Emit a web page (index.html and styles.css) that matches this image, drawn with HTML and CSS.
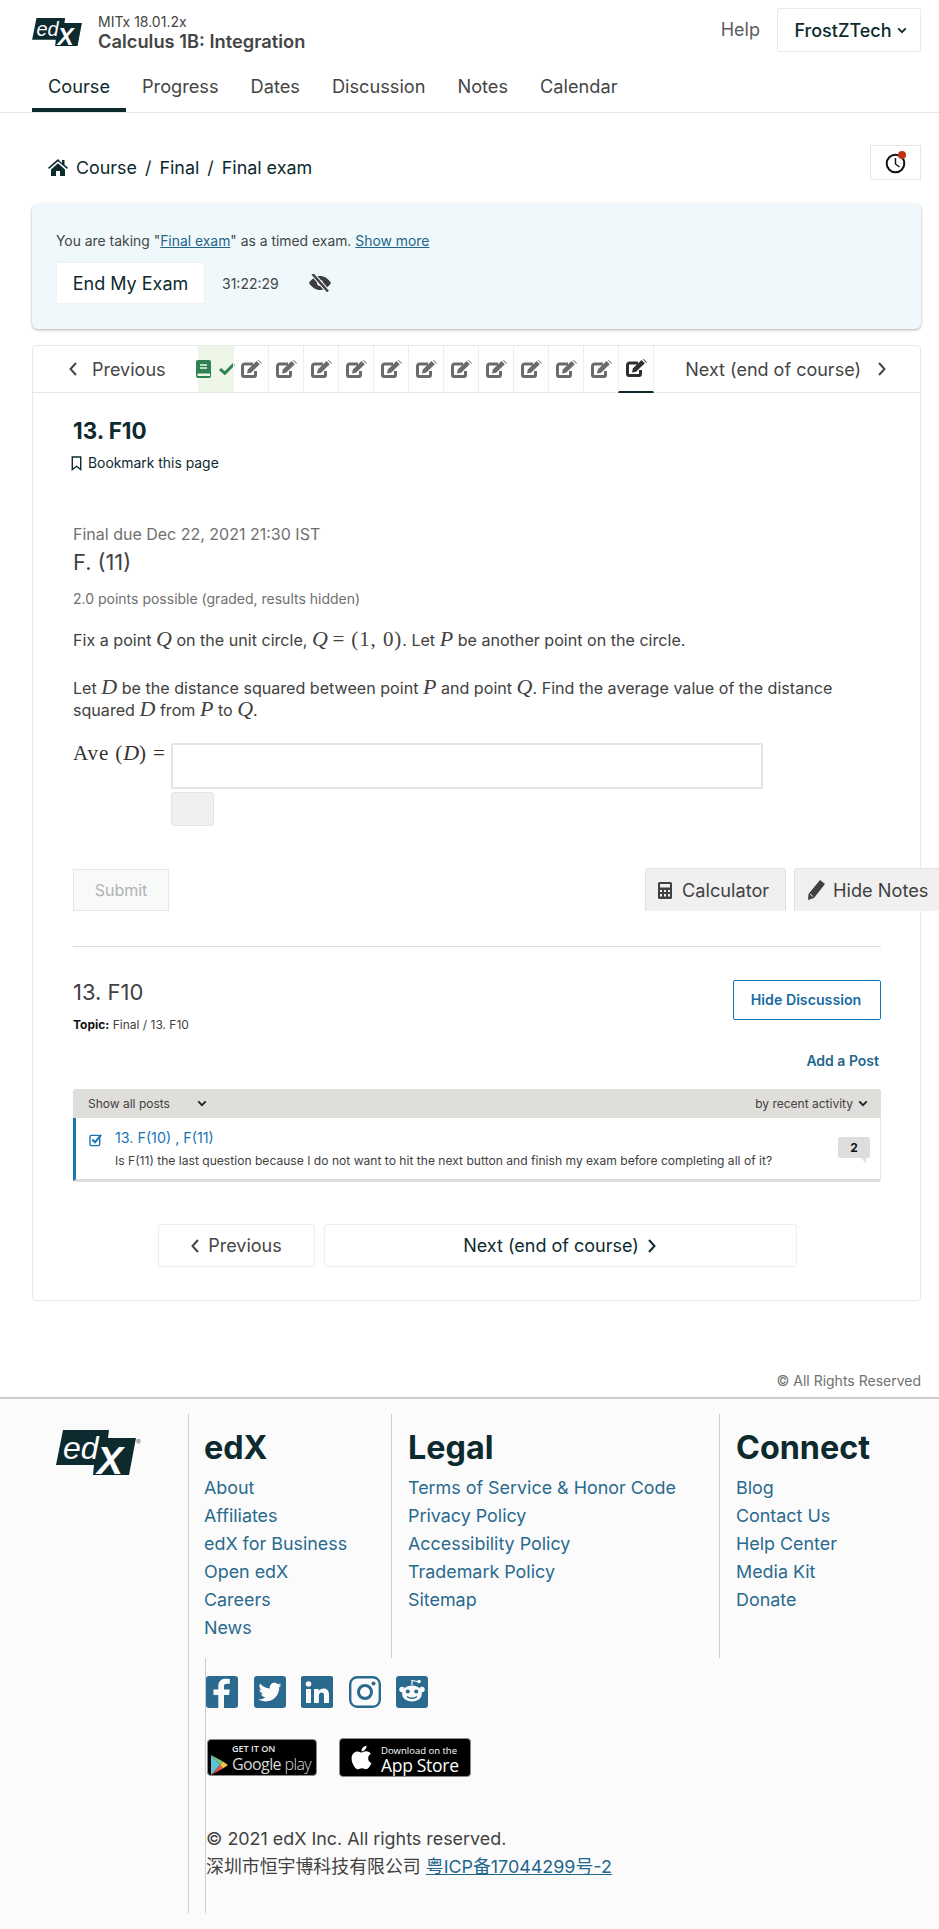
FILE: index.html
```html
<!DOCTYPE html>
<html lang="en">
<head>
<meta charset="utf-8">
<title>Calculus 1B: Integration</title>
<link rel="stylesheet" href="styles.css">
</head>
<body>
<svg class="defs" width="0" height="0" aria-hidden="true">
  <symbol id="edit" viewBox="0 0 21 18">
    <path d="M12 4H3.500A2 2 0 0 0 1.500 6v9a1.500 1.500 0 0 0 1.500 1.500h10a1.500 1.500 0 0 0 1.500-1.500V11" fill="none" stroke="currentColor" stroke-width="3"/>
    <path d="M6 13.500l.8-4L15.500 1l3.300 3.200-8.700 8.500z M16.800.2l.8-.2 3.200 3-.3 1z" fill="currentColor"/>
  </symbol>
  <symbol id="chev-l" viewBox="0 0 10 16"><path d="M8 2L2.500 8 8 14" fill="none" stroke="currentColor" stroke-width="2"/></symbol>
  <symbol id="chev-r" viewBox="0 0 10 16"><path d="M2 2l5.500 6L2 14" fill="none" stroke="currentColor" stroke-width="2"/></symbol>
  <symbol id="chev-d" viewBox="0 0 12 8"><path d="M1.500 1.500L6 6l4.500-4.500" fill="none" stroke="currentColor" stroke-width="2.200"/></symbol>
</svg>

<header class="site-header">
  <div class="head-row">
    <div class="brand">
      <svg class="logo-small" viewBox="0 0 80 45">
        <path d="M7 0H53L52 8H80L73 45H37L38 35H0z" fill="#0d2a2e"/>
        <text x="7" y="29" class="logo-ed">ed</text>
        <text x="41" y="44" class="logo-x">X</text>
      </svg>
      <div class="course-id">
        <div class="org">MITx 18.01.2x</div>
        <div class="course-name">Calculus 1B: Integration</div>
      </div>
    </div>
    <div class="head-actions">
      <a class="help">Help</a>
      <button class="user-btn">FrostZTech <svg class="chev-small"><use href="#chev-d"/></svg></button>
    </div>
  </div>
  <nav class="tabs">
    <a class="tab active">Course</a>
    <a class="tab">Progress</a>
    <a class="tab">Dates</a>
    <a class="tab">Discussion</a>
    <a class="tab">Notes</a>
    <a class="tab">Calendar</a>
  </nav>
</header>

<div class="crumb-row">
  <div class="crumbs">
    <svg class="home" viewBox="0 0 20 17"><path d="M10 0L0 8.700l1 1.200L10 2.300l9 7.600 1-1.200-3.500-3V1h-2.500v3.300z M3 10.400L10 4.300l7 6.100V17h-5v-5H8v5H3z" fill="#0d2a2e"/></svg>
    <span>Course</span><span class="sep">/</span><span>Final</span><span class="sep">/</span><span>Final exam</span>
  </div>
  <button class="clock-btn">
    <svg viewBox="0 0 22 24" width="22" height="24"><circle cx="10.500" cy="13.500" r="8.800" fill="none" stroke="#111" stroke-width="2"/><path d="M10.500 8v6l4 3" fill="none" stroke="#111" stroke-width="1.400"/><circle cx="17" cy="5" r="4" fill="#c0320f"/></svg>
  </button>
</div>

<section class="banner">
  <p class="banner-text">You are taking "<a class="ulink">Final exam</a>" as a timed exam. <a class="ulink">Show more</a></p>
  <div class="banner-row">
    <button class="end-btn">End My Exam</button>
    <span class="timer">31:22:29</span>
    <svg class="eye" viewBox="0 0 22 18"><path d="M0 9c3-4.800 6.800-7 11-7s8 2.200 11 7c-3 4.800-6.800 7-11 7S3 13.800 0 9z" fill="#3d3d3d"/><circle cx="11" cy="9" r="3" fill="#eff8fa"/><path d="M3.500 0L19 17.500" stroke="#eff8fa" stroke-width="4.500"/><path d="M3.500 0L19 17.500" stroke="#3d3d3d" stroke-width="2.400"/></svg>
  </div>
</section>

<main class="card">
  <nav class="unit-nav">
    <a class="un-prev"><svg class="chev"><use href="#chev-l"/></svg><span>Previous</span></a>
    <div class="un-items">
      <a class="un-item done">
        <svg class="book" viewBox="0 0 15 18"><rect width="15" height="18" rx="2" fill="#2e8151"/><path d="M4 5h7M4 8h7" stroke="#eef6e8" stroke-width="1.400"/><path d="M1.500 13.500h12.500v2.500H1.500z" fill="#eef6e8"/></svg>
        <svg class="tick" viewBox="0 0 16 12"><path d="M1 6l4.800 4.300L15 1" fill="none" stroke="#2e8151" stroke-width="3"/></svg>
      </a>
      <a class="un-item"><svg class="ed"><use href="#edit"/></svg></a>
      <a class="un-item"><svg class="ed"><use href="#edit"/></svg></a>
      <a class="un-item"><svg class="ed"><use href="#edit"/></svg></a>
      <a class="un-item"><svg class="ed"><use href="#edit"/></svg></a>
      <a class="un-item"><svg class="ed"><use href="#edit"/></svg></a>
      <a class="un-item"><svg class="ed"><use href="#edit"/></svg></a>
      <a class="un-item"><svg class="ed"><use href="#edit"/></svg></a>
      <a class="un-item"><svg class="ed"><use href="#edit"/></svg></a>
      <a class="un-item"><svg class="ed"><use href="#edit"/></svg></a>
      <a class="un-item"><svg class="ed"><use href="#edit"/></svg></a>
      <a class="un-item"><svg class="ed"><use href="#edit"/></svg></a>
      <a class="un-item current"><svg class="ed"><use href="#edit"/></svg></a>
    </div>
    <a class="un-next"><span>Next (end of course)</span><svg class="chev"><use href="#chev-r"/></svg></a>
  </nav>

  <div class="content">
    <h1 class="unit-title">13. F10</h1>
    <a class="bookmark"><svg viewBox="0 0 11 16" width="11" height="15"><path d="M1 1h9v13.500L5.500 11 1 14.500z" fill="none" stroke="#0d2a2e" stroke-width="1.500"/></svg>Bookmark this page</a>
    <div class="due">Final due Dec 22, 2021 21:30 IST</div>
    <h2 class="problem">F. (11)</h2>
    <div class="points">2.0 points possible (graded, results hidden)</div>
    <p class="para">Fix a point <i class="m">Q</i> on the unit circle, <i class="m">Q</i> <span class="mr">= (1, 0)</span>. Let <i class="m">P</i> be another point on the circle.</p>
    <p class="para para-2">Let <i class="m">D</i> be the distance squared between point <i class="m">P</i> and point <i class="m">Q</i>. Find the average value of the distance squared <i class="m">D</i> from <i class="m">P</i> to <i class="m">Q</i>.</p>
    <div class="answer">
      <div class="ans-label"><span class="mr">Ave (</span><i class="m">D</i><span class="mr">) =</span></div>
      <div class="ans-fields">
        <div class="ans-input"></div>
        <div class="ans-status"></div>
      </div>
    </div>
    <div class="tools">
      <button class="submit">Submit</button>
      <div class="tool-tabs">
        <a class="tool"><svg viewBox="0 0 14 17" width="14" height="17"><path fill-rule="evenodd" d="M1.500 0h11A1.500 1.500 0 0 1 14 1.500v14a1.500 1.500 0 0 1-1.500 1.500h-11A1.500 1.500 0 0 1 0 15.500v-14A1.500 1.500 0 0 1 1.500 0zM2 2v3.500h10V2zM2 8v2h2V8zm4 0v2h2V8zm4 0v2h2V8zM2 12v2.500h2V12zm4 0v2.500h2V12zm4 0v2.500h2V12z" fill="#414141"/></svg>Calculator</a>
        <a class="tool"><svg viewBox="0 0 18 20" width="18" height="20"><path d="M13 0l5 4-11 14-6 2 .5-6z" fill="#414141"/><path d="M3 14l3 2.500" stroke="#f0f0f0" stroke-width="1"/></svg>Hide Notes</a>
      </div>
    </div>
    <hr class="rule">
    <div class="disc-head">
      <div>
        <h2 class="disc-title">13. F10</h2>
        <div class="topic"><b>Topic:</b> Final / 13. F10</div>
      </div>
      <button class="hide-disc">Hide Discussion</button>
    </div>
    <div class="add-post"><a>Add a Post</a></div>
    <div class="threads">
      <div class="thr-head">
        <span class="thr-filter">Show all posts<svg class="chev-tiny"><use href="#chev-d"/></svg></span>
        <span class="thr-sort">by recent activity<svg class="chev-tiny"><use href="#chev-d"/></svg></span>
      </div>
      <div class="thread">
        <svg class="thr-check" viewBox="0 0 14 15" width="13" height="14"><rect x="1" y="2.500" width="10.500" height="11" rx="1.500" fill="none" stroke="#1a75b5" stroke-width="1.500"/><path d="M3.500 7l3 3L13 2" fill="none" stroke="#1a75b5" stroke-width="2.200"/></svg>
        <div class="thr-body">
          <a class="thr-title">13. F(10) , F(11)</a>
          <div class="thr-preview">Is F(11) the last question because I do not want to hit the next button and finish my exam before completing all of it?</div>
        </div>
        <span class="badge">2</span>
      </div>
    </div>
    <div class="seq-bottom">
      <a class="seq-btn seq-prev"><svg class="chev"><use href="#chev-l"/></svg>Previous</a>
      <a class="seq-btn seq-next">Next (end of course)<svg class="chev"><use href="#chev-r"/></svg></a>
    </div>
  </div>
</main>

<div class="rights">© All Rights Reserved</div>

<footer class="footer">
  <div class="foot-logo">
    <svg class="logo-big" viewBox="0 0 80 45">
      <path d="M7 0H53L52 8H80L73 45H37L38 35H0z" fill="#0d2a2e"/>
      <text x="7" y="29" class="logo-ed">ed</text>
      <text x="41" y="44" class="logo-x">X</text>
    </svg>
    <span class="reg">®</span>
  </div>
  <div class="foot-main">
    <div class="foot-cols">
      <div class="fcol fcol-a">
        <h2>edX</h2>
        <a>About</a><a>Affiliates</a><a>edX for Business</a><a>Open edX</a><a>Careers</a><a>News</a>
      </div>
      <div class="fcol fcol-b">
        <h2>Legal</h2>
        <a>Terms of Service &amp; Honor Code</a><a>Privacy Policy</a><a>Accessibility Policy</a><a>Trademark Policy</a><a>Sitemap</a>
      </div>
      <div class="fcol fcol-c">
        <h2>Connect</h2>
        <a>Blog</a><a>Contact Us</a><a>Help Center</a><a>Media Kit</a><a>Donate</a>
      </div>
    </div>
    <div class="foot-lower">
      <div class="social">
        <svg viewBox="0 0 32 32" width="32" height="32"><rect width="32" height="32" rx="3" fill="#2a6a8e"/><path d="M18 32V19h5l.8-5.500H18V10.500c0-1.600.5-2.700 2.800-2.700h3V3c-.6-.1-2.300-.2-4.300-.2-4.300 0-7.200 2.600-7.200 7.300v3.400H7.500V19h4.800v13z" fill="#fbfbfb"/></svg>
        <svg viewBox="0 0 32 32" width="32" height="32"><rect width="32" height="32" rx="3" fill="#2a6a8e"/><g transform="translate(4.500 4.500) scale(.045)"><path d="M459.370 151.716c.325 4.548.325 9.097.325 13.645 0 138.720-105.583 298.558-298.558 298.558-59.452 0-114.680-17.219-161.137-47.106 8.447.974 16.568 1.299 25.340 1.299 49.055 0 94.213-16.568 130.274-44.832-46.132-.975-84.792-31.188-98.112-72.772 6.498.974 12.995 1.624 19.818 1.624 9.421 0 18.843-1.300 27.614-3.573-48.081-9.747-84.143-51.980-84.143-102.985v-1.299c13.969 7.797 30.214 12.670 47.431 13.319-28.264-18.843-46.781-51.005-46.781-87.391 0-19.492 5.197-37.360 14.294-52.954 51.655 63.675 129.300 105.258 216.365 109.807-1.624-7.797-2.599-15.918-2.599-24.040 0-57.828 46.782-104.934 104.934-104.934 30.213 0 57.502 12.670 76.670 33.137 23.715-4.548 46.456-13.320 66.599-25.340-7.798 24.366-24.366 44.833-46.132 57.827 21.117-2.273 41.584-8.122 60.426-16.243-14.292 20.791-32.161 39.308-52.628 54.253z" fill="#fbfbfb"/></g></svg>
        <svg viewBox="0 0 32 32" width="32" height="32"><rect width="32" height="32" rx="2" fill="#2a6a8e"/><circle cx="7.500" cy="8" r="2.800" fill="#fbfbfb"/><path d="M5 13h5v14H5z M13 13h4.700v2c1-1.500 2.700-2.400 4.800-2.400 3.900 0 5.500 2.400 5.500 6.400v8h-5v-7.300c0-2-.7-3.200-2.400-3.200-1.900 0-2.700 1.300-2.700 3.200V27H13z" fill="#fbfbfb"/></svg>
        <svg viewBox="0 0 32 32" width="32" height="32"><rect x="1.200" y="1.200" width="29.600" height="29.600" rx="7" fill="#fbfbfb" stroke="#2a6a8e" stroke-width="2.400"/><circle cx="16" cy="16" r="6.500" fill="none" stroke="#2a6a8e" stroke-width="3"/><circle cx="24.500" cy="7.500" r="2" fill="#2a6a8e"/></svg>
        <svg viewBox="0 0 32 32" width="32" height="32"><rect width="32" height="32" rx="3" fill="#2a6a8e"/><path d="M16 9V4.500l5 1" fill="none" stroke="#fbfbfb" stroke-width="1.200"/><circle cx="23" cy="5.500" r="1.800" fill="#fbfbfb"/><ellipse cx="16" cy="17.500" rx="10" ry="8" fill="#fbfbfb"/><circle cx="6" cy="13.500" r="2.700" fill="#fbfbfb"/><circle cx="26" cy="13.500" r="2.700" fill="#fbfbfb"/><circle cx="11.800" cy="15.500" r="2" fill="#2a6a8e"/><circle cx="20.200" cy="15.500" r="2" fill="#2a6a8e"/><path d="M11 20.500c2.500 2.300 7.500 2.300 10 0" fill="none" stroke="#2a6a8e" stroke-width="1.300"/></svg>
      </div>
      <div class="stores">
        <a class="store gplay">
          <svg viewBox="0 0 17 20" width="17" height="20"><path d="M0 0l9 10-9 10z" fill="#5ac6d8"/><path d="M0 0l12 6.500L9 10z" fill="#7bc47f"/><path d="M0 20l12-6.500L9 10z" fill="#e2574c"/><path d="M12 6.500L17 10l-5 3.500L9 10z" fill="#f2c14e"/></svg>
          <span class="gp-top">GET IT ON</span>
          <span class="gp-main">Google<span class="gp-play"> play</span></span>
        </a>
        <a class="store appstore">
          <svg viewBox="0 0 384 512" width="21" height="27"><path d="M318.700 268.700c-.2-36.700 16.400-64.400 50-84.800-18.800-26.900-47.200-41.700-84.700-44.600-35.500-2.800-74.300 20.700-88.500 20.700-15 0-49.400-19.700-76.400-19.700C63.300 141.200 4 184.800 4 273.500q0 39.300 14.400 81.200c12.800 36.700 59 126.700 107.200 125.200 25.200-.6 43-17.900 75.800-17.900 31.800 0 48.300 17.900 76.400 17.900 48.600-.7 90.400-82.500 102.600-119.300-65.200-30.700-61.700-90-61.700-91.900zm-56.600-164.200c27.300-32.400 24.800-61.900 24-72.500-24.100 1.400-52 16.400-67.900 34.900-17.500 19.800-27.800 44.300-25.600 71.900 26.100 2 49.900-11.400 69.500-34.300z" fill="#fff"/></svg>
          <span class="as-top">Download on the</span>
          <span class="as-main">App Store</span>
        </a>
      </div>
      <div class="copy">© 2021 edX Inc. All rights reserved.</div>
      <div class="copy">深圳市恒宇博科技有限公司 <a class="icp">粤ICP备17044299号-2</a></div>
    </div>
  </div>
</footer>
</body>
</html>
```
FILE: styles.css
```css
* { box-sizing: border-box; }
html, body { margin: 0; padding: 0; }
body {
  width: 939px;
  height: 1929px;
  overflow: hidden;
  background: #fff;
  color: #414141;
  font-family: Inter, "Noto Sans CJK SC", sans-serif;
  font-size: 16px;
}
a { color: inherit; text-decoration: none; }
button { font-family: inherit; }
h1, h2, p { margin: 0; }
.defs { position: absolute; }
.logo-ed { font: italic 400 32px "Liberation Sans", sans-serif; fill: #fff; }
.logo-x { font: italic 700 39px "Liberation Sans", sans-serif; fill: #fff; }

.site-header { border-bottom: 1px solid #e6e6e6; height: 113px; }
.head-row { display: flex; justify-content: space-between; padding: 8px 18px 0 32px; height: 60px; }
.brand { display: flex; align-items: flex-start; gap: 16px; padding-top: 10px; }
.logo-small { width: 50px; height: 28px; overflow: visible; }
.course-id { margin-top: -5px; }
.org { font-size: 14px; line-height: 18px; color: #454545; }
.course-name { font-size: 18.300px; font-weight: 600; line-height: 24px; color: #454545; margin-top: -2px; }
.head-actions { display: flex; align-items: flex-start; gap: 17px; }
.help { font-size: 18px; line-height: 44px; color: #5b5b5b; }
.user-btn {
  width: 144px; height: 44px; background: #fff; border: 1px solid #eaeaea; border-radius: 2px;
  font-size: 18px; font-weight: 500; color: #0d2a2e; padding: 0 0 0 3px; display: flex; align-items: center; justify-content: center; gap: 5px;
}
.chev-small { width: 10px; height: 7px; color: #0d2a2e; }
.tabs { display: flex; padding-left: 32px; }
.tab { padding: 14px 16px 10px; font-size: 18.200px; line-height: 24px; height: 52px; color: #454545; border-bottom: 4px solid transparent; white-space: nowrap; }
.tab.active { color: #0d2a2e; border-bottom-color: #0d2a2e; }

.crumb-row { display: flex; justify-content: space-between; padding: 32px 18px 0 48px; }
.crumbs { display: flex; align-items: center; height: 26px; margin-top: 9px; font-size: 17.900px; color: #0d2a2e; }
.crumbs .sep { margin: 0 8px; }
.home { width: 20px; height: 17px; margin-right: 8px; }
.clock-btn { width: 51px; height: 35px; background: #fff; border: 1px solid #e6e6e6; padding: 0 0 1px; display: flex; align-items: center; justify-content: center; }

.banner {
  margin: 24px 18px 0 32px; height: 125px; padding: 27px 24px 0;
  background: #eff8fa; border-radius: 6px;
  box-shadow: 0 1px 3px rgba(0,0,0,.3);
}
.banner-text { font-size: 13.900px; line-height: 20px; color: #454545; }
.ulink { color: #23668c; text-decoration: underline; }
.banner-row { display: flex; align-items: center; margin-top: 11px; }
.end-btn { width: 149px; height: 42px; background: #fff; border: 1px solid #f2f2f2; padding: 0; font-size: 18px; color: #0d2a2e; }
.timer { font-size: 14px; color: #454545; margin-left: 17px; }
.eye { width: 22px; height: 18px; margin-left: 30px; }

.card { margin: 16px 18px 0 32px; height: 956px; border: 1px solid #e8e8e8; border-radius: 4px; }
.unit-nav { display: flex; height: 47px; border-bottom: 1px solid #e6e6e6; font-size: 18px; color: #454545; }
.un-prev { width: 165px; display: flex; align-items: center; padding-left: 35px; gap: 14px; }
.chev { width: 10px; height: 16px; flex: none; }
.un-items { display: flex; }
.un-item { width: 35px; height: 46px; border-left: 1px solid #eee; display: flex; align-items: center; justify-content: center; color: #6b6b6b; position: relative; }
.un-item:last-child { border-right: 1px solid #eee; width: 36px; }
.ed { width: 21px; height: 18px; margin-top: -1px; }
.un-item.done { background: #eef6e8; gap: 8px; padding: 0; justify-content: flex-start; }
.book { width: 15px; height: 18px; margin-left: -3px; flex: none; }
.tick { width: 16px; height: 12px; flex: none; }
.un-item.current { color: #2f2f2f; border-bottom: 2px solid #0d2a2e; height: 47px; }
.un-next { flex: 1; display: flex; align-items: center; justify-content: flex-end; padding-right: 33px; gap: 16px; }

.content { padding: 24px 39px 0 40px; }
.unit-title { font-size: 22.400px; font-weight: 700; line-height: 28px; color: #0d2a2e; }
.bookmark { display: flex; align-items: center; gap: 6px; margin: 8px 0 0 -2px; font-size: 13.900px; line-height: 20px; color: #0d2a2e; }
.due { margin-top: 49px; font-size: 16px; line-height: 24px; color: #707070; }
.problem { margin-top: 1px; font-size: 21.800px; font-weight: 400; line-height: 30px; color: #414141; }
.points { margin-top: 12px; font-size: 14px; line-height: 20px; color: #707070; }
.para { margin-top: 20px; font-size: 16.100px; line-height: 22px; color: #414141; }
.para-2 { margin-top: 26px; width: 790px; }
.m { font-family: "Liberation Serif", serif; font-style: italic; font-size: 22px; line-height: 0; }
.mr { font-family: "Liberation Serif", serif; font-size: 21px; line-height: 0; letter-spacing: .9px; }
.answer { display: flex; margin-top: 22px; }
.ans-label { width: 98px; line-height: 22px; white-space: nowrap; color: #333; }
.ans-input { width: 592px; height: 46px; background: #fff; border: 2px solid #e4e4e4; border-radius: 2px; }
.ans-status { width: 43px; height: 34px; margin-top: 3px; background: #f0f0f0; border: 1px solid #e4e4e4; border-radius: 3px; }
.tools { display: flex; justify-content: space-between; align-items: flex-end; margin-top: 42px; height: 43px; }
.submit { width: 96px; height: 42px; background: #f8f9f9; border: 1px solid #e6e6e6; padding: 0; font-size: 16px; color: #b3b3b3; }
.tool-tabs { display: flex; gap: 8px; margin-right: -64px; }
.tool {
  height: 43px; display: flex; align-items: center; gap: 10px;
  background: #f0f0f0; border: 1px solid #e0e0e0; border-bottom: 0; border-radius: 4px 4px 0 0;
  font-size: 18.200px; color: #414141; white-space: nowrap;
}
.tool:first-child { width: 141px; padding-left: 12px; }
.tool:last-child { width: 151px; padding-left: 12px; gap: 8px; }
.rule { margin: 35px 0 0; border: 0; height: 1px; background: #dcdcdc; }
.disc-head { display: flex; justify-content: space-between; margin-top: 30px; height: 56px; }
.disc-title { font-size: 22px; font-weight: 400; line-height: 30px; color: #414141; }
.topic { margin-top: 10px; font-size: 12px; line-height: 16px; color: #414141; }
.topic b { color: #111; }
.hide-disc { margin-top: 3px; width: 148px; height: 40px; background: #fff; border: 1px solid #1a75b5; border-radius: 2px; padding: 0 2px 2px 0; font-size: 14.200px; font-weight: 600; color: #1a6aa2; }
.add-post { margin-top: 18px; text-align: right; padding-right: 2px; font-size: 14px; font-weight: 600; line-height: 20px; color: #23668c; }
.threads { margin-top: 18px; }
.thr-head { height: 29px; background: #e0dedb; border-radius: 3px 3px 0 0; display: flex; justify-content: space-between; align-items: center; padding: 0 13px 0 15px; font-size: 12px; color: #414141; }
.thr-filter { display: flex; align-items: center; gap: 27px; }
.thr-sort { display: flex; align-items: center; gap: 5px; }
.chev-tiny { width: 10px; height: 7px; color: #222; }
.thread { position: relative; height: 64px; display: flex; background: #fff; border-left: 3px solid #1a75b5; border-bottom: 3px solid #ddd; border-right: 1px solid #e6e6e6; border-radius: 0 0 3px 3px; }
.thr-check { margin: 15px 0 0 13px; flex: none; }
.thr-body { margin-left: 13px; padding-top: 10px; }
.thr-title { display: block; font-size: 14.300px; line-height: 20px; color: #1a75b5; }
.thr-preview { margin-top: 3px; font-size: 12.100px; line-height: 20px; color: #414141; white-space: nowrap; }
.badge { position: absolute; left: 762px; top: 19px; width: 32px; height: 21px; background: #ddd; border-radius: 2px; text-align: center; font-size: 12px; font-weight: 700; line-height: 21px; color: #111; }
.badge::after { content: ""; position: absolute; right: 4px; bottom: -6px; border-top: 6px solid #e4e4e4; border-left: 5px solid transparent; }
.seq-bottom { display: flex; justify-content: center; gap: 9px; margin-top: 42px; }
.seq-btn { height: 43px; display: flex; align-items: center; justify-content: center; gap: 8px; border: 1px solid #eee; border-radius: 3px; font-size: 18px; }
.seq-prev { width: 157px; color: #454545; }
.seq-next { width: 473px; color: #0d2a2e; }

.rights { margin-top: 70px; padding-right: 18px; text-align: right; font-size: 14px; line-height: 20px; color: #707070; }
.footer { margin-top: 6px; height: 532px; border-top: 2px solid #ccc; background: #fbfbfb; display: flex; padding-top: 15px; }
.foot-logo { width: 188px; padding: 16px 0 0 56px; position: relative; }
.logo-big { width: 80px; height: 45px; display: block; overflow: visible; }
.reg { position: absolute; left: 136px; top: 24px; font-size: 7px; color: #666; }
.foot-main { width: 751px; height: 499px; border-left: 1px solid #ccc; }
.foot-cols { display: flex; height: 244px; }
.fcol { padding-top: 14px; }
.fcol + .fcol { border-left: 1px solid #ccc; }
.fcol h2 { font-size: 32.300px; font-weight: 700; line-height: 40px; color: #0d2a2e; margin-bottom: 6px; }
.fcol a { display: block; font-size: 17.900px; line-height: 28px; color: #2a6a8e; white-space: nowrap; }
.fcol-a { width: 202px; padding-left: 15px; }
.fcol-b { width: 328px; padding-left: 16px; }
.fcol-c { flex: 1; padding-left: 16px; }
.foot-lower { margin-left: 16px; height: 255px; border-left: 1px solid #ccc; padding: 18px 0 0; }
.social { display: flex; gap: 15.500px; }
.stores { display: flex; align-items: center; gap: 22px; margin: 30px 0 0 1px; height: 39px; }
.store { display: block; position: relative; background: #000; border: 1px solid #8a8a8a; border-radius: 4px; color: #fff; font-family: "Open Sans", sans-serif; white-space: nowrap; }
.store svg { position: absolute; }
.gplay { width: 110px; height: 37px; }
.gplay svg { left: 3px; top: 15px; }
.gp-top { position: absolute; left: 24px; top: 3px; font-size: 9px; font-weight: 600; line-height: 12px; color: #e8e8e8; }
.gp-main { position: absolute; left: 24px; top: 13px; font-size: 16px; line-height: 22px; letter-spacing: -.6px; color: #d8d8d8; }
.gp-play { font-weight: 300; }
.appstore { width: 132px; height: 39px; }
.appstore svg { left: 11px; top: 5px; }
.as-top { position: absolute; left: 41px; top: 5px; font-size: 9.500px; line-height: 14px; }
.as-main { position: absolute; left: 41px; top: 14px; font-size: 17.500px; font-weight: 500; line-height: 24px; letter-spacing: -.3px; }
.copy { font-size: 17.900px; line-height: 28px; color: #414141; white-space: nowrap; }
.stores + .copy { margin-top: 48px; }
.icp { color: #23668c; text-decoration: underline; }
```
